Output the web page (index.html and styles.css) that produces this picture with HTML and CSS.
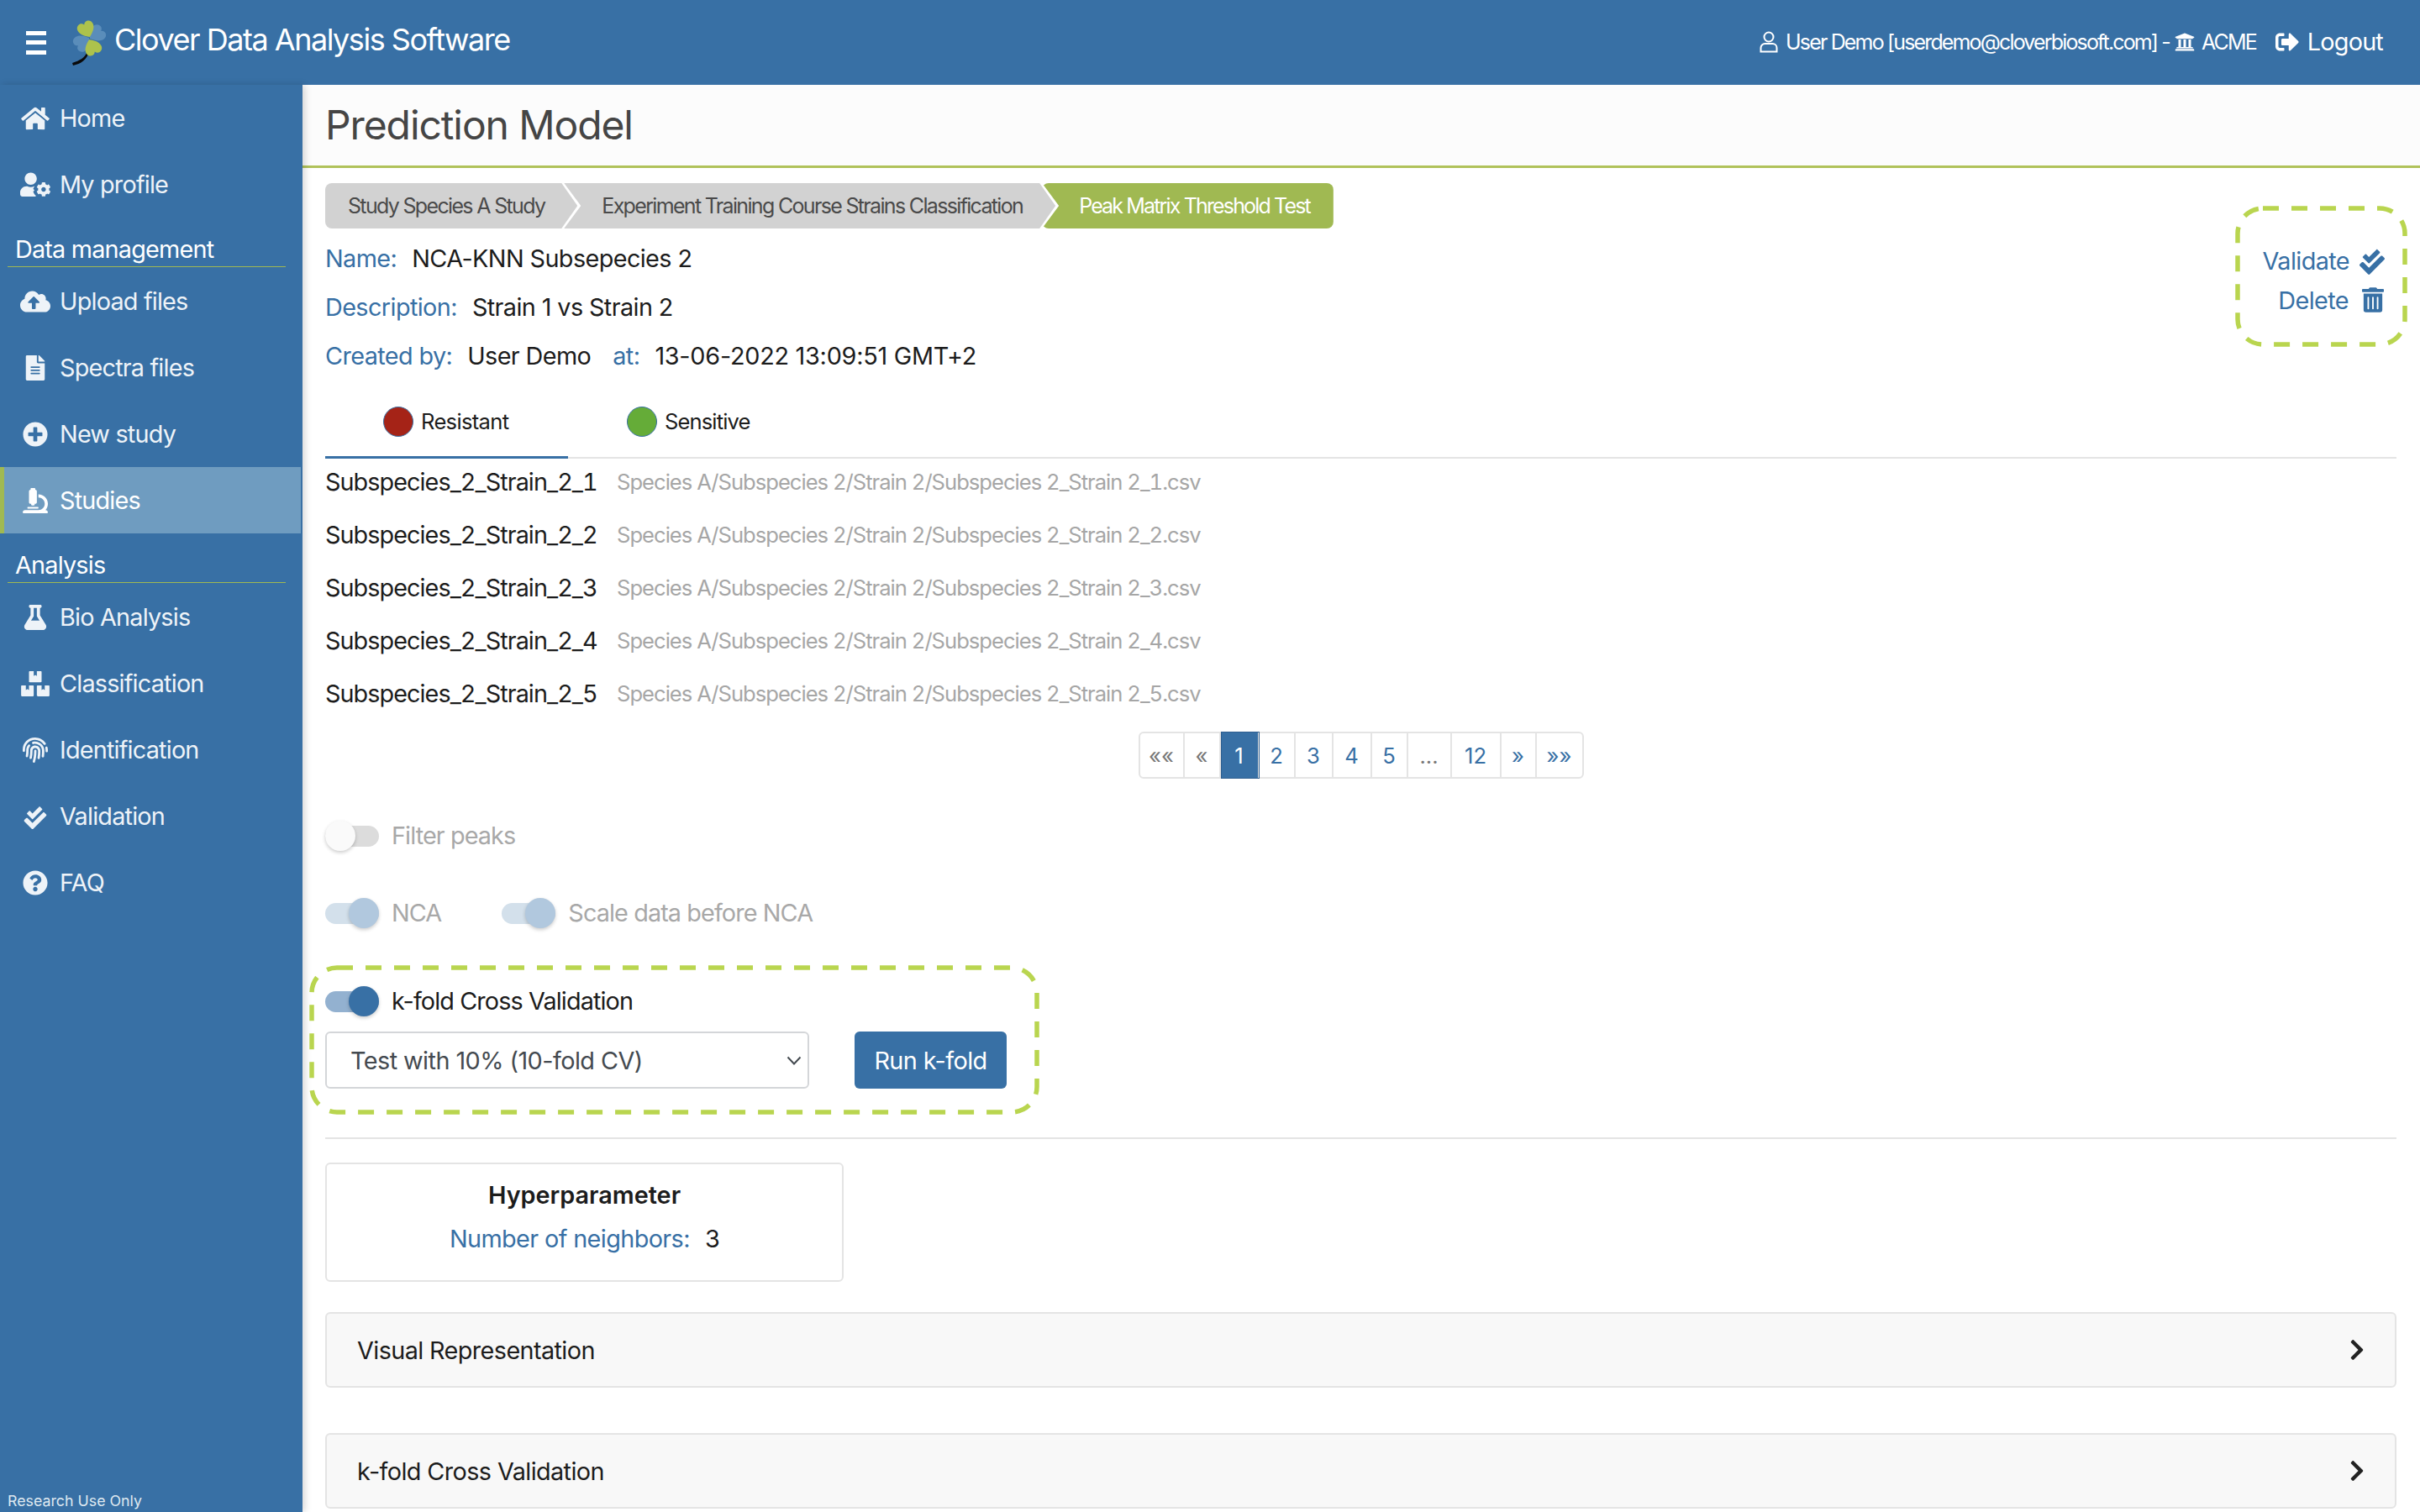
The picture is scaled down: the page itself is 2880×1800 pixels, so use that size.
FILE: index.html
```html
<!DOCTYPE html>
<html lang="en">
<head>
  <meta charset="UTF-8" />
  <title>Prediction Model | Clover Data Analysis Software</title>
  <link rel="stylesheet" href="styles.css">
</head>
<body>
  <header class="topbar">
    <div class="brand">
      <div class="hamburger"><span></span><span></span><span></span></div>
      <svg class="logo" viewBox="84 18 44 56">
        <path d="M104 56C101 64 95 67 86 70L87 73C96 71 104 66 106 56z" fill="#0a0a0a"/>
        <path class="heart-blue" d="M0 0C-4-3-10-7-10-13C-10-17-7-19-4.500-19C-2.500-19-1-18 0-16C1-18 2.500-19 4.500-19C7-19 10-17 10-13C10-7 4-3 0 0z" transform="translate(107 41) rotate(55)"/>
        <path class="heart-blue" d="M0 0C-4-3-10-7-10-13C-10-17-7-19-4.500-19C-2.500-19-1-18 0-16C1-18 2.500-19 4.500-19C7-19 10-17 10-13C10-7 4-3 0 0z" transform="translate(106 40) rotate(-125)"/>
        <path class="heart-green" d="M0 0C-4-3-10-7-10-13C-10-17-7-19-4.500-19C-2.500-19-1-18 0-16C1-18 2.500-19 4.500-19C7-19 10-17 10-13C10-7 4-3 0 0z" transform="translate(107 39) rotate(-25)"/>
        <path class="heart-green" d="M0 0C-4-3-10-7-10-13C-10-17-7-19-4.500-19C-2.500-19-1-18 0-16C1-18 2.500-19 4.500-19C7-19 10-17 10-13C10-7 4-3 0 0z" transform="translate(106 42) rotate(155)"/>
      </svg>
      <span class="brand-name">Clover Data Analysis Software</span>
    </div>
    <div class="userbar">
      <svg class="icon-user" viewBox="0 0 22 26"><circle cx="11" cy="7" r="5.500"/><path d="M1.500 24.500V20a5 5 0 0 1 5-5h9a5 5 0 0 1 5 5v4.500z"/></svg>
      <span class="user-text">User Demo [userdemo@cloverbiosoft.com] -</span>
      <svg class="icon-bank" viewBox="0 0 512 512"><path d="M496 128v16a8 8 0 0 1-8 8h-24v12c0 6.627-5.373 12-12 12H60c-6.627 0-12-5.373-12-12v-12H24a8 8 0 0 1-8-8v-16a8 8 0 0 1 4.941-7.392l232-88a7.996 7.996 0 0 1 6.118 0l232 88A8 8 0 0 1 496 128zm-24 304H40c-13.255 0-24 10.745-24 24v16a8 8 0 0 0 8 8h464a8 8 0 0 0 8-8v-16c0-13.255-10.745-24-24-24zM96 192v192H60c-6.627 0-12 5.373-12 12v20h416v-20c0-6.627-5.373-12-12-12h-36V192h-64v192h-64V192h-64v192h-64V192H96z"/></svg>
      <span class="user-text company">ACME</span>
      <svg class="icon-logout" viewBox="0 0 512 512"><path d="M497 273L329 441c-15 15-41 4.500-41-17v-96H152c-13.300 0-24-10.700-24-24v-96c0-13.300 10.700-24 24-24h136V88c0-21.400 25.900-32 41-17l168 168c9.300 9.400 9.300 24.600 0 34zM192 436v-40c0-6.600-5.400-12-12-12H96c-17.700 0-32-14.300-32-32V160c0-17.700 14.300-32 32-32h84c6.600 0 12-5.400 12-12V76c0-6.600-5.400-12-12-12H96c-53 0-96 43-96 96v192c0 53 43 96 96 96h84c6.600 0 12-5.400 12-12z"/></svg>
      <span class="logout-text">Logout</span>
    </div>
  </header>

  <div class="layout">
    <nav class="sidebar">
      <a class="nav-item first">
        <span class="nav-icon"><svg viewBox="0 0 576 512"><path d="M280.370 148.260L96 300.110V464a16 16 0 0 0 16 16l112.060-.29a16 16 0 0 0 15.920-16V368a16 16 0 0 1 16-16h64a16 16 0 0 1 16 16v95.640a16 16 0 0 0 16 16.050L464 480a16 16 0 0 0 16-16V300L295.670 148.260a12.190 12.190 0 0 0-15.300 0zM571.600 251.470L488 182.560V44.050a12 12 0 0 0-12-12h-56a12 12 0 0 0-12 12v72.610L318.470 43a48 48 0 0 0-61 0L4.340 251.470a12 12 0 0 0-1.600 16.900l25.500 31A12 12 0 0 0 45.150 301l235.220-193.740a12.190 12.190 0 0 1 15.300 0L530.900 301a12 12 0 0 0 16.900-1.600l25.500-31a12 12 0 0 0-1.700-16.930z"/></svg></span>Home
      </a>
      <a class="nav-item">
        <span class="nav-icon"><svg viewBox="0 0 640 512"><path d="M610.500 373.300c2.600-14.100 2.600-28.500 0-42.600l25.800-14.900c3-1.700 4.300-5.200 3.300-8.500-6.700-21.600-18.200-41.200-33.200-57.400-2.300-2.500-6-3.100-9-1.400l-25.800 14.900c-10.900-9.300-23.400-16.500-36.900-21.300v-29.800c0-3.400-2.400-6.400-5.700-7.100-22.300-5-45-4.800-66.200 0-3.300.7-5.700 3.700-5.700 7.100v29.800c-13.500 4.800-26 12-36.900 21.300l-25.800-14.900c-2.900-1.700-6.700-1.100-9 1.400-15 16.200-26.500 35.800-33.200 57.400-1 3.300.4 6.800 3.300 8.500l25.800 14.900c-2.600 14.100-2.600 28.500 0 42.600l-25.800 14.900c-3 1.700-4.300 5.200-3.300 8.500 6.700 21.600 18.200 41.100 33.200 57.400 2.300 2.500 6 3.100 9 1.400l25.800-14.900c10.900 9.300 23.400 16.500 36.900 21.300v29.800c0 3.400 2.400 6.400 5.700 7.100 22.300 5 45 4.800 66.200 0 3.300-.7 5.700-3.700 5.700-7.100v-29.800c13.500-4.800 26-12 36.900-21.300l25.800 14.900c2.900 1.700 6.700 1.100 9-1.400 15-16.200 26.500-35.800 33.200-57.400 1-3.300-.4-6.800-3.300-8.500l-25.800-14.900zM496 400.500c-26.800 0-48.500-21.800-48.500-48.500s21.800-48.500 48.500-48.500 48.500 21.800 48.500 48.500-21.700 48.500-48.500 48.500zM224 256c70.700 0 128-57.300 128-128S294.700 0 224 0 96 57.300 96 128s57.300 128 128 128zM134.400 288h16.700c22.200 10.200 46.900 16 72.900 16s50.600-5.800 72.900-16h10c-13 13-23 29-29 47-2.400 8 .6 16 8 20l13 8c-.6 6-.6 11 0 17l-13 8c-7 4-10 12-8 20 7 22 19 43 35 60 3 3 8 5 13 6v10c0 7 2 13 6 19H48c-26.500 0-48-21.500-48-48v-41.600C0 348.200 60.200 288 134.400 288z"/></svg></span>My profile
      </a>
      <div class="nav-heading">Data management</div>
      <a class="nav-item">
        <span class="nav-icon"><svg viewBox="0 0 640 512"><path d="M537.600 226.600c4.100-10.700 6.400-22.400 6.400-34.600 0-53-43-96-96-96-19.700 0-38.100 6-53.300 16.200C367 64.200 315.300 32 256 32c-88.400 0-160 71.600-160 160 0 2.700.1 5.400.2 8.100C40.200 219.800 0 273.200 0 336c0 79.500 64.500 144 144 144h368c70.700 0 128-57.300 128-128 0-61.900-44-113.600-102.400-125.400zM393.400 288H328v112c0 8.800-7.200 16-16 16h-48c-8.800 0-16-7.200-16-16V288h-65.400c-14.300 0-21.400-17.200-11.300-27.300l105.400-105.400c6.200-6.200 16.400-6.200 22.600 0l105.400 105.400c10.100 10.100 2.900 27.300-11.300 27.300z"/></svg></span>Upload files
      </a>
      <a class="nav-item">
        <span class="nav-icon"><svg viewBox="0 0 384 512"><path d="M224 136V0H24C10.700 0 0 10.700 0 24v464c0 13.300 10.700 24 24 24h336c13.300 0 24-10.700 24-24V160H248c-13.200 0-24-10.800-24-24zm64 236c0 6.600-5.400 12-12 12H108c-6.600 0-12-5.400-12-12v-8c0-6.600 5.400-12 12-12h168c6.600 0 12 5.400 12 12v8zm0-64c0 6.600-5.400 12-12 12H108c-6.600 0-12-5.400-12-12v-8c0-6.600 5.400-12 12-12h168c6.600 0 12 5.400 12 12v8zm0-72v8c0 6.600-5.400 12-12 12H108c-6.600 0-12-5.400-12-12v-8c0-6.600 5.400-12 12-12h168c6.600 0 12 5.400 12 12zm96-114.100v6.100H256V0h6.100c6.400 0 12.500 2.500 17 7l97.900 98c4.500 4.500 7 10.600 7 16.900z"/></svg></span>Spectra files
      </a>
      <a class="nav-item">
        <span class="nav-icon"><svg viewBox="0 0 512 512"><path d="M256 8C119 8 8 119 8 256s111 248 248 248 248-111 248-248S393 8 256 8zm144 276c0 6.600-5.400 12-12 12h-92v92c0 6.600-5.400 12-12 12h-56c-6.600 0-12-5.400-12-12v-92h-92c-6.600 0-12-5.400-12-12v-56c0-6.600 5.400-12 12-12h92v-92c0-6.600 5.400-12 12-12h56c6.600 0 12 5.400 12 12v92h92c6.600 0 12 5.400 12 12v56z"/></svg></span>New study
      </a>
      <a class="nav-item active">
        <span class="nav-icon"><svg viewBox="0 0 512 512"><path d="M160 320h12v16c0 8.840 7.160 16 16 16h40c8.840 0 16-7.160 16-16v-16h12c17.670 0 32-14.330 32-32V64c0-17.670-14.330-32-32-32V16c0-8.840-7.160-16-16-16h-64c-8.840 0-16 7.160-16 16v16c-17.670 0-32 14.330-32 32v224c0 17.670 14.330 32 32 32zm304 128h-1.290C493.240 413.990 512 369.200 512 320c0-105.880-86.120-192-192-192v64c70.580 0 128 57.420 128 128s-57.420 128-128 128H48c-26.510 0-48 21.490-48 48 0 8.840 7.160 16 16 16h480c8.840 0 16-7.160 16-16 0-26.510-21.490-48-48-48zm-360-32h208c4.420 0 8-3.580 8-8v-16c0-4.420-3.580-8-8-8H104c-4.420 0-8 3.580-8 8v16c0 4.420 3.580 8 8 8z"/></svg></span>Studies
      </a>
      <div class="nav-heading">Analysis</div>
      <a class="nav-item">
        <span class="nav-icon"><svg viewBox="0 0 448 512"><path d="M437.200 403.500L320 215V64h8c13.300 0 24-10.700 24-24V24c0-13.300-10.700-24-24-24H120c-13.300 0-24 10.700-24 24v16c0 13.300 10.700 24 24 24h8v151L10.800 403.500C-18.500 450.600 15.300 512 70.900 512h306.200c55.700 0 89.400-61.500 60.100-108.500zM137.900 320l48.200-77.600c3.700-5.200 5.800-11.600 5.800-18.400V64h64v160c0 6.900 2.200 13.200 5.800 18.400l48.200 77.600h-172z"/></svg></span>Bio Analysis
      </a>
      <a class="nav-item">
        <span class="nav-icon"><svg viewBox="0 0 576 512"><path d="M560 288h-80v96l-32-21.300-32 21.300v-96h-80c-8.800 0-16 7.200-16 16v192c0 8.800 7.200 16 16 16h224c8.800 0 16-7.200 16-16V304c0-8.800-7.200-16-16-16zm-384-64h224c8.800 0 16-7.200 16-16V16c0-8.800-7.200-16-16-16h-80v96l-32-21.300L256 96V0h-80c-8.800 0-16 7.200-16 16v192c0 8.800 7.200 16 16 16zm64 64h-80v96l-32-21.300L96 384v-96H16c-8.800 0-16 7.200-16 16v192c0 8.800 7.200 16 16 16h224c8.800 0 16-7.200 16-16V304c0-8.800-7.200-16-16-16z"/></svg></span>Classification
      </a>
      <a class="nav-item">
        <span class="nav-icon"><svg viewBox="0 0 512 512"><path d="M256.120 245.960c-13.250 0-24 10.740-24 24 1.140 72.250-8.140 141.900-27.700 211.550-2.730 9.720 2.150 30.490 23.120 30.490 10.480 0 20.110-6.920 23.090-17.520 13.530-47.910 31.040-125.410 29.480-224.520.01-13.250-10.730-24-23.990-24zm-.86-81.730C194 164.160 151.250 211.300 152.100 265.320c.75 47.940-3.750 95.910-13.370 142.550-2.690 12.980 5.670 25.690 18.640 28.360 13.050 2.670 25.670-5.660 28.360-18.640 10.340-50.090 15.170-101.580 14.370-153.020-.41-25.950 19.920-52.490 54.450-52.340 31.310.47 57.150 25.340 57.620 55.470.77 48.050-2.810 96.330-10.610 143.550-2.170 13.060 6.690 25.420 19.760 27.580 19.970 3.330 26.810-15.100 27.580-19.770 8.280-50.030 12.060-101.210 11.270-152.110-.88-55.800-47.940-101.880-104.910-102.720zm-110.690-19.780c-10.300-8.340-25.370-6.800-33.760 3.480-25.620 31.500-39.390 71.280-38.750 112 .59 37.580-2.470 75.270-9.110 112.050-2.340 13.050 6.310 25.530 19.360 27.890 20.110 3.500 27.070-14.810 27.890-19.360 7.190-39.840 10.500-80.660 9.860-121.330-.47-29.880 9.200-57.880 28-80.970 8.350-10.280 6.790-25.390-3.490-33.760zm109.470-62.330c-15.410-.41-30.870 1.440-45.780 4.970-12.890 3.060-20.870 15.980-17.830 28.890 3.060 12.890 16 20.830 28.890 17.830 11.050-2.610 22.470-3.770 34-3.690 75.430 1.130 137.730 61.500 138.880 134.580.59 37.880-1.280 76.110-5.580 113.630-1.500 13.170 7.950 25.080 21.110 26.580 16.720 1.950 25.510-11.880 26.580-21.110a929.060 929.060 0 0 0 5.890-119.850c-1.560-98.750-85.070-180.330-186.160-181.830zm252.070 121.450c-2.860-12.920-15.510-21.200-28.610-18.270-12.940 2.860-21.120 15.660-18.260 28.610 4.710 21.410 4.910 37.410 4.700 61.600-.11 13.270 10.550 24.090 23.800 24.200h.2c13.170 0 23.890-10.610 24-23.800.18-22.180.4-44.110-5.830-72.340zm-40.120-90.720C417.290 43.460 337.600 1.290 252.810.02 183.020-.82 118.470 24.910 70.460 72.940 24.090 119.370-.9 181.040.14 246.650l-.12 21.470c-.39 13.250 10.030 24.310 23.280 24.690.23.020.48.020.72.020 12.920 0 23.590-10.300 23.970-23.300l.16-23.640c-.83-52.500 19.160-101.860 56.280-139 38.760-38.800 91.340-59.670 147.680-58.860 69.450 1.030 134.730 35.560 174.620 92.390 7.610 10.860 22.560 13.450 33.420 5.860 10.840-7.620 13.460-22.590 5.840-33.430z"/></svg></span>Identification
      </a>
      <a class="nav-item">
        <span class="nav-icon"><svg viewBox="0 -64 512 576"><path d="M505 174.800l-39.600-39.600c-9.400-9.400-24.600-9.400-33.900 0L192 374.700 80.600 263.200c-9.400-9.400-24.600-9.400-33.900 0L7 302.900c-9.400 9.400-9.400 24.600 0 34L175 505c9.400 9.400 24.600 9.400 33.900 0l296-296.200c9.400-9.500 9.400-24.700.1-34zm-324.300 106c6.200 6.300 16.400 6.300 22.600 0l208-208.200c6.200-6.300 6.200-16.400 0-22.600L366.100 4.700c-6.200-6.300-16.400-6.300-22.600 0L192 156.200l-55.400-55.500c-6.200-6.300-16.400-6.300-22.600 0L68.700 146c-6.200 6.300-6.200 16.400 0 22.600l112 112.200z"/></svg></span>Validation
      </a>
      <a class="nav-item">
        <span class="nav-icon"><svg viewBox="0 0 512 512"><path d="M504 256c0 136.997-111.043 248-248 248S8 392.997 8 256C8 119.083 119.043 8 256 8s248 111.083 248 248zM262.655 90c-54.497 0-89.255 22.957-116.549 63.758-3.536 5.286-2.353 12.415 2.715 16.258l34.699 26.310c5.205 3.947 12.621 3.008 16.665-2.122 17.864-22.658 30.113-35.797 57.303-35.797 20.429 0 45.698 13.148 45.698 32.958 0 14.976-12.363 22.667-32.534 33.976C247.128 238.528 216 254.941 216 296v4c0 6.627 5.373 12 12 12h56c6.627 0 12-5.373 12-12v-1.333c0-28.462 83.186-29.647 83.186-106.667 0-58.002-60.165-102-116.531-102zM256 338c-25.365 0-46 20.635-46 46 0 25.364 20.635 46 46 46s46-20.636 46-46c0-25.365-20.635-46-46-46z"/></svg></span>FAQ
      </a>
      <div class="sidebar-foot">Research Use Only</div>
    </nav>

    <main class="main">
      <div class="page-title"><h1>Prediction Model</h1></div>
      <div class="content">
        <div class="summary">
          <div class="summary-left">
            <div class="crumbs">
              <span class="crumb crumb-first">Study Species A Study</span>
              <span class="crumb crumb-mid">Experiment Training Course Strains Classification</span>
              <span class="crumb crumb-last">Peak Matrix Threshold Test</span>
            </div>
            <div class="meta-row"><span class="meta-label">Name:</span>NCA-KNN Subsepecies 2</div>
            <div class="meta-row"><span class="meta-label">Description:</span>Strain 1 vs Strain 2</div>
            <div class="meta-row"><span class="meta-label">Created by:</span>User Demo<span class="meta-label meta-at">at:</span><span class="meta-date">13-06-2022 13:09:51 GMT+2</span></div>
          </div>
          <div class="actions">
            <svg class="dash-frame"><rect/></svg>
            <a class="action">Validate
              <svg class="action-check" viewBox="0 -64 512 576"><path d="M505 174.800l-39.600-39.600c-9.400-9.400-24.600-9.400-33.900 0L192 374.700 80.600 263.200c-9.400-9.400-24.600-9.400-33.900 0L7 302.900c-9.400 9.400-9.400 24.600 0 34L175 505c9.400 9.400 24.600 9.400 33.900 0l296-296.200c9.400-9.500 9.400-24.700.1-34zm-324.300 106c6.200 6.300 16.400 6.300 22.600 0l208-208.200c6.200-6.300 6.200-16.400 0-22.600L366.100 4.700c-6.200-6.300-16.400-6.300-22.600 0L192 156.200l-55.400-55.500c-6.200-6.300-16.400-6.300-22.600 0L68.700 146c-6.200 6.300-6.200 16.400 0 22.600l112 112.200z"/></svg>
            </a>
            <a class="action">Delete
              <svg class="action-trash" viewBox="0 0 448 512"><path d="M32 464a48 48 0 0 0 48 48h288a48 48 0 0 0 48-48V128H32zm272-256a16 16 0 0 1 32 0v224a16 16 0 0 1-32 0zm-96 0a16 16 0 0 1 32 0v224a16 16 0 0 1-32 0zm-96 0a16 16 0 0 1 32 0v224a16 16 0 0 1-32 0zM432 32H312l-9.400-18.700A24 24 0 0 0 281.100 0H166.800a23.720 23.720 0 0 0-21.400 13.300L136 32H16A16 16 0 0 0 0 48v32a16 16 0 0 0 16 16h416a16 16 0 0 0 16-16V48a16 16 0 0 0-16-16z"/></svg>
            </a>
          </div>
        </div>

        <div class="tabs">
          <div class="tab tab-active"><span class="dot dot-red"></span>Resistant</div>
          <div class="tab"><span class="dot dot-green"></span>Sensitive</div>
        </div>

        <div class="spectrum"><span class="spectrum-name">Subspecies_2_Strain_2_1</span><span class="spectrum-path">Species A/Subspecies 2/Strain 2/Subspecies 2_Strain 2_1.csv</span></div>
        <div class="spectrum"><span class="spectrum-name">Subspecies_2_Strain_2_2</span><span class="spectrum-path">Species A/Subspecies 2/Strain 2/Subspecies 2_Strain 2_2.csv</span></div>
        <div class="spectrum"><span class="spectrum-name">Subspecies_2_Strain_2_3</span><span class="spectrum-path">Species A/Subspecies 2/Strain 2/Subspecies 2_Strain 2_3.csv</span></div>
        <div class="spectrum"><span class="spectrum-name">Subspecies_2_Strain_2_4</span><span class="spectrum-path">Species A/Subspecies 2/Strain 2/Subspecies 2_Strain 2_4.csv</span></div>
        <div class="spectrum"><span class="spectrum-name">Subspecies_2_Strain_2_5</span><span class="spectrum-path">Species A/Subspecies 2/Strain 2/Subspecies 2_Strain 2_5.csv</span></div>

        <div class="pager-wrap">
          <div class="pager">
            <span class="page page-off pw-54">««</span>
            <span class="page page-off pw-43">«</span>
            <span class="page page-on pw-46">1</span>
            <span class="page pw-43">2</span>
            <span class="page pw-45">3</span>
            <span class="page pw-46">4</span>
            <span class="page pw-43">5</span>
            <span class="page page-off pw-52">...</span>
            <span class="page pw-59">12</span>
            <span class="page pw-42">»</span>
            <span class="page pw-55">»»</span>
          </div>
        </div>

        <div class="switch-row filter-row">
          <label class="switch-item is-muted"><span class="switch switch-off"></span>Filter peaks</label>
        </div>
        <div class="switch-row nca-row">
          <label class="switch-item is-muted"><span class="switch switch-soft"></span>NCA</label>
          <label class="switch-item is-muted"><span class="switch switch-soft"></span>Scale data before NCA</label>
        </div>

        <div class="kfold-box">
          <svg class="dash-frame"><rect/></svg>
          <div class="switch-row">
            <label class="switch-item"><span class="switch switch-on"></span>k-fold Cross Validation</label>
          </div>
          <div class="kfold-controls">
            <select class="kfold-select"><option>Test with 10% (10-fold CV)</option></select>
            <button class="run-btn" type="button">Run k-fold</button>
          </div>
        </div>

        <hr class="divider">

        <div class="hyper-card">
          <div class="hyper-title">Hyperparameter</div>
          <div class="hyper-line"><span class="meta-label">Number of neighbors:</span>3</div>
        </div>

        <div class="accordion acc-visual">Visual Representation
          <svg viewBox="0 0 320 512"><path d="M285.476 272.971L91.132 467.314c-9.373 9.373-24.569 9.373-33.941 0l-22.667-22.667c-9.357-9.357-9.375-24.522-.04-33.901L188.505 256 34.484 101.255c-9.335-9.379-9.317-24.544.04-33.901l22.667-22.667c9.373-9.373 24.569-9.373 33.941 0L285.475 239.030c9.373 9.372 9.373 24.568.001 33.941z"/></svg>
        </div>
        <div class="accordion acc-kfold">k-fold Cross Validation
          <svg viewBox="0 0 320 512"><path d="M285.476 272.971L91.132 467.314c-9.373 9.373-24.569 9.373-33.941 0l-22.667-22.667c-9.357-9.357-9.375-24.522-.04-33.901L188.505 256 34.484 101.255c-9.335-9.379-9.317-24.544.04-33.901l22.667-22.667c9.373-9.373 24.569-9.373 33.941 0L285.475 239.030c9.373 9.372 9.373 24.568.001 33.941z"/></svg>
        </div>
      </div>
    </main>
  </div>
</body>
</html>
```
FILE: styles.css
```css
:root {
  --blue: #3870a5;
  --green: #a0b952;
  --dash: #b9d54f;
  --line: #e4e4e4;
  --text: #1c1c1c;
}

* {
  box-sizing: border-box;
  margin: 0;
  padding: 0;
}

html, body {
  height: 1800px;
  overflow: hidden;
}

body {
  font-family: Inter, "Noto Sans", sans-serif;
  font-size: 28.8px;
  letter-spacing: -0.6px;
  color: var(--text);
  background: #fff;
}

/* Top bar */
.topbar {
  height: 101px;
  background: var(--blue);
  color: #fff;
  display: flex;
  align-items: center;
  justify-content: space-between;
  padding: 0 44px 8px 31px;
}

.brand {
  display: flex;
  align-items: center;
}

.hamburger {
  width: 24px;
  height: 28px;
  display: flex;
  flex-direction: column;
  justify-content: space-between;
  margin-top: 8px;
}

.hamburger span {
  height: 5px;
  background: #fff;
}

.logo {
  width: 44px;
  height: 56px;
  margin-left: 29px;
  margin-top: 8px;
}

.heart-green { fill: #adc24c; }
.heart-blue { fill: #5a8dba; }

.brand-name {
  font-size: 36px;
  letter-spacing: -1.48px;
  margin-left: 8px;
}

.userbar {
  display: flex;
  align-items: center;
  margin-top: 6px;
}

.icon-user {
  width: 22px;
  height: 26px;
  fill: none;
  stroke: #fff;
  stroke-width: 2;
}

.user-text {
  font-size: 25px;
  letter-spacing: -1.85px;
  margin-left: 9px;
}

.user-text.company {
  margin-left: 8px;
}

.icon-bank {
  width: 24px;
  height: 24px;
  fill: #fff;
  margin-left: 6px;
}

.icon-logout {
  width: 28px;
  height: 28px;
  fill: #fff;
  margin-left: 23px;
}

.logout-text {
  font-size: 28.8px;
  letter-spacing: -0.8px;
  margin-left: 10px;
}

/* Sidebar */
.layout {
  display: flex;
  height: 1699px;
}

.sidebar {
  width: 360px;
  flex-shrink: 0;
  background: var(--blue);
  color: #eef3f8;
  letter-spacing: -0.8px;
  display: flex;
  flex-direction: column;
  padding-right: 2px;
  box-shadow: 3px 0 8px rgba(0, 0, 0, 0.16);
  position: relative;
}

.nav-item {
  height: 79px;
  display: flex;
  align-items: center;
  padding-left: 24px;
  flex-shrink: 0;
}

.nav-item.active {
  background: #6f9cc0;
  border-left: 5px solid var(--green);
  padding-left: 19px;
  color: #fff;
}

.nav-icon {
  width: 36px;
  height: 36px;
  margin-right: 11px;
  display: flex;
  align-items: center;
  justify-content: center;
}

.nav-icon svg {
  width: 36px;
  height: 30px;
  fill: currentColor;
}

.nav-heading {
  height: 39px;
  margin: 20px 18px 1px 9px;
  padding-left: 9px;
  border-bottom: 1px solid var(--green);
  line-height: 35px;
  color: #fff;
  flex-shrink: 0;
}

.sidebar-foot {
  margin-top: auto;
  padding: 0 0 2px 9px;
  font-size: 17.8px;
  letter-spacing: 0;
  line-height: 22px;
  color: #dfe8f0;
}

/* Main area */
.main {
  flex: 1;
  min-width: 0;
}

.page-title {
  height: 99px;
  background: #fcfcfc;
  border-bottom: 3px solid #b0c25a;
  padding: 19px 27px 0;
}

.page-title h1 {
  font-size: 48px;
  font-weight: 400;
  letter-spacing: -1.1px;
  line-height: 58px;
  color: #454545;
}

.content {
  padding: 18px 28px 0 27px;
}

.summary {
  display: flex;
  justify-content: space-between;
  align-items: flex-start;
}

.crumbs {
  display: flex;
  height: 54px;
  margin-bottom: 7px;
}

.crumb {
  display: flex;
  align-items: center;
  font-size: 25px;
  letter-spacing: -1.67px;
  height: 54px;
  background: #d2d2d2;
  color: #4a4a4a;
  border-radius: 8px;
  white-space: nowrap;
}

.crumb-first {
  padding: 0 39px 0 27px;
  clip-path: polygon(0 0, calc(100% - 19px) 0, 100% 50%, calc(100% - 19px) 100%, 0 100%);
}

.crumb-mid {
  margin-left: -16px;
  padding: 0 39px 0 45px;
  border-radius: 0;
  clip-path: polygon(0 0, calc(100% - 19px) 0, 100% 50%, calc(100% - 19px) 100%, 0 100%, 20px 50%);
}

.crumb-last {
  margin-left: -16px;
  padding: 0 28px 0 44px;
  letter-spacing: -1.85px;
  background: var(--green);
  color: #fff;
  clip-path: polygon(0 0, 100% 0, 100% 100%, 0 100%, 20px 50%);
}

.meta-row {
  height: 58px;
  line-height: 58px;
}

.meta-label {
  color: var(--blue);
  margin-right: 18px;
}

.meta-at {
  margin-left: 26px;
}

.meta-date {
  letter-spacing: -0.25px;
}

.actions {
  position: relative;
  width: 205px;
  height: 168px;
  margin: 27px -13px 0 0;
  display: flex;
  flex-direction: column;
  align-items: flex-end;
  justify-content: center;
  gap: 11px;
  padding: 9px 27px 0 0;
  color: var(--blue);
}

/* dashed highlight drawn over a block */
.dash-frame {
  position: absolute;
  top: 0;
  left: 0;
  width: 100%;
  height: 100%;
  pointer-events: none;
}

.dash-frame rect {
  x: 3px;
  y: 3px;
  width: calc(100% - 6px);
  height: calc(100% - 6px);
  rx: 30px;
  fill: none;
  stroke: var(--dash);
  stroke-width: 5.5;
  stroke-dasharray: 19 15;
}

.action {
  display: flex;
  align-items: center;
  height: 36px;
}

.action svg {
  fill: var(--blue);
}

.action-check {
  width: 30px;
  height: 34px;
  margin-left: 12px;
}

.action-trash {
  width: 26px;
  height: 30px;
  margin: 0 1px 0 16px;
}

/* Tabs */
.tabs {
  display: flex;
  height: 76px;
  border-bottom: 2px solid var(--line);
  margin-top: 17px;
}

.tab {
  width: 289px;
  height: 76px;
  padding: 0 0 10px 69px;
  display: flex;
  align-items: center;
  font-size: 25.6px;
  letter-spacing: -0.7px;
  flex-shrink: 0;
}

.tab + .tab {
  padding: 0 0 13px 70px;
  letter-spacing: -0.9px;
}

.tab-active {
  border-bottom: 3px solid var(--blue);
}

.dot {
  width: 36px;
  height: 36px;
  border-radius: 50%;
  margin-right: 9px;
  border: 1px solid #3870a5;
}

.dot-red { background: #a52317; }
.dot-green { background: #65ac38; }

/* File rows */
.spectrum {
  height: 63px;
  line-height: 56px;
  display: flex;
  font-variant-numeric: tabular-nums;
}

.spectrum-name {
  width: 347px;
  letter-spacing: -0.95px;
  white-space: nowrap;
}

.spectrum-path {
  font-size: 25.6px;
  letter-spacing: -1px;
  color: #a6a6a6;
}

/* Pagination */
.pager-wrap {
  display: flex;
  justify-content: center;
  margin-top: 10px;
}

.pager {
  display: flex;
  height: 56px;
  border: 2px solid var(--line);
  border-radius: 6px;
  font-size: 25.6px;
  letter-spacing: 0;
  color: var(--blue);
}

.page {
  display: flex;
  align-items: center;
  justify-content: center;
  border-right: 2px solid var(--line);
}

.page:last-child { border-right: 0; }
.page-off { color: #777; }

.page-on {
  background: var(--blue);
  color: #fff;
  margin: -2px 0;
  outline: 1px solid #2f5f90;
  outline-offset: -1px;
}

.pw-42 { width: 42px; }
.pw-43 { width: 43px; }
.pw-45 { width: 45px; }
.pw-46 { width: 46px; }
.pw-52 { width: 52px; }
.pw-54 { width: 53px; }
.pw-55 { width: 54px; }
.pw-59 { width: 59px; }

/* Switches */
.switch-row {
  display: flex;
  gap: 72px;
  height: 40px;
  letter-spacing: -0.9px;
}

.filter-row { margin-top: 48px; }
.nca-row { margin-top: 52px; }

.switch-item {
  display: flex;
  align-items: center;
  padding-bottom: 2px;
}

.is-muted { color: #a8a8a8; }

.switch {
  width: 64px;
  height: 25px;
  border-radius: 13px;
  margin-right: 15px;
  position: relative;
  top: 1px;
  flex-shrink: 0;
}

.switch::after {
  content: '';
  position: absolute;
  top: -6px;
  width: 36px;
  height: 36px;
  border-radius: 50%;
  box-shadow: 0 2px 4px rgba(0, 0, 0, 0.2);
}

.switch-off { background: #dcdcdc; }
.switch-off::after { left: 0; background: #fafafa; }

.switch-soft { background: #d3e0eb; }
.switch-soft::after { right: 0; background: #b1c8de; }

.switch-on { background: #93b1d0; }
.switch-on::after { right: 0; background: var(--blue); }

/* k-fold highlighted block */
.kfold-box {
  position: relative;
  width: 869px;
  height: 178px;
  margin: 42px 0 0 -19px;
  padding: 23px 0 0 19px;
}

.kfold-controls {
  display: flex;
  gap: 54px;
  margin-top: 16px;
}

.kfold-select {
  appearance: none;
  width: 576px;
  height: 68px;
  padding: 0 28px;
  font: inherit;
  letter-spacing: -0.55px;
  color: #444a50;
  background: #fff url("data:image/svg+xml,%3Csvg xmlns='http://www.w3.org/2000/svg' viewBox='0 0 18 11'%3E%3Cpath d='M1.500 1.500l7.500 8 7.500-8' fill='none' stroke='%23444a50' stroke-width='2'/%3E%3C/svg%3E") no-repeat right 7px center / 18px 11px;
  border: 2px solid #d4d6d9;
  border-radius: 6px;
}

.run-btn {
  width: 181px;
  height: 68px;
  font: inherit;
  letter-spacing: -0.6px;
  color: #fff;
  background: var(--blue);
  border: 0;
  border-radius: 6px;
}

.divider {
  border: 0;
  height: 2px;
  background: var(--line);
  margin-top: 27px;
}

/* Hyperparameter card */
.hyper-card {
  width: 617px;
  height: 142px;
  margin-top: 28px;
  border: 2px solid var(--line);
  border-radius: 6px;
  text-align: center;
  padding-top: 16px;
}

.hyper-title {
  font-weight: 600;
  letter-spacing: 0;
  line-height: 42px;
}

.hyper-line {
  line-height: 42px;
  margin-top: 10px;
}

/* Accordions */
.accordion {
  height: 90px;
  display: flex;
  align-items: center;
  justify-content: space-between;
  padding: 0 34px 0 36px;
  background: #f8f8f8;
  border: 2px solid var(--line);
  border-radius: 6px;
}

.accordion svg {
  width: 22px;
  height: 28px;
  fill: #222;
}

.acc-visual { margin-top: 36px; }
.acc-kfold { margin-top: 54px; }
```
